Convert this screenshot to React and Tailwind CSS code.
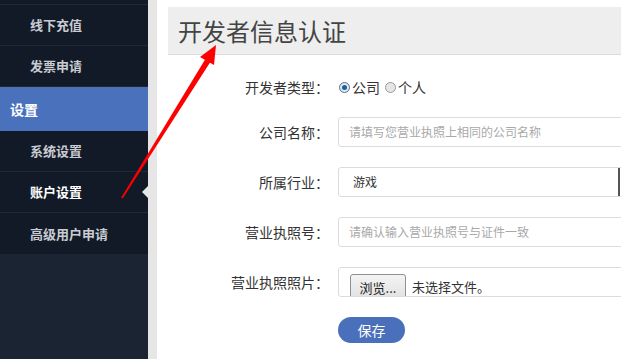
const font = { fontFamily: '"Microsoft YaHei", "Noto Sans CJK SC", sans-serif' };

const NavItem = ({ label, active, last }) => (
  <div
    className={`h-[41px] flex items-center pl-[30px] text-[13px] font-bold ${
      active ? 'text-white' : 'text-[#c9ccd2]'
    } ${last ? 'h-[40px]' : 'border-b border-[#1f2838]'}`}
  >
    {label}
  </div>
);

const Field = ({ label, children }) => (
  <div className="flex items-center">
    <div className="w-[172px] text-right text-[14px] text-[#333]">{label}</div>
    <div className="ml-[9px] -mr-[10px] flex-1">{children}</div>
  </div>
);

const TextBox = ({ placeholder, value, dark }) => (
  <div className="relative h-[30px] w-full border border-[#dcdcdc] rounded-[3px] flex items-center pl-[10px] text-[12px] bg-white">
    {value ? (
      <span className="text-[#333] pl-[4px]">{value}</span>
    ) : (
      <span className="text-[#a9a9a9]">{placeholder}</span>
    )}
    {dark && <div className="absolute right-[10px] top-0 h-full w-[2px] bg-[#555]" />}
  </div>
);

export default function App() {
  return (
    <div className="relative w-[621px] h-[359px] overflow-hidden flex bg-white" style={font}>
      <aside className="w-[148px] shrink-0 flex flex-col bg-[#1b2433]">
        <div className="bg-[#121a28]">
          <div className="h-[5px] border-b border-[#1f2838]" />
          <NavItem label="线下充值" />
          <NavItem label="发票申请" />
          <div className="h-[44px] bg-[#4a72bc] flex items-center pl-[10px] text-white font-bold text-[14px]">
            设置
          </div>
          <NavItem label="系统设置" />
          <div className="relative">
            <NavItem label="账户设置" active />
            <div className="absolute right-0 top-[14px] w-0 h-0 border-y-[6px] border-y-transparent border-r-[6px] border-r-[#e6e6e6]" />
          </div>
          <NavItem label="高级用户申请" last />
        </div>
      </aside>
      <div className="w-[9px] shrink-0 bg-[#e6e6e6]" />
      <main className="flex-1 pt-[7px] pl-[11px]">
        <div className="h-[48px] -mr-[10px] bg-[#eeeeee] border-b border-[#dddddd] flex items-center pl-[10px] text-[24px] text-[#444]">
          开发者信息认证
        </div>
        <div className="-ml-[11px] mt-[23px] flex flex-col">
          <div className="flex items-center h-[18px]">
            <div className="w-[172px] text-right text-[14px] text-[#333]">开发者类型：</div>
            <div className="ml-[10px] flex items-center text-[14px] text-[#333]">
              <span className="w-[11px] h-[11px] rounded-full border border-[#5a6e82] bg-[#dfe9f3] flex items-center justify-center mr-[2px]">
                <span className="w-[5px] h-[5px] rounded-full bg-[#1f5f9e]" />
              </span>
              公司
              <span className="ml-[5px] w-[11px] h-[11px] rounded-full border border-[#9a9a9a] bg-[#e6e6e6] mr-[2px]" />
              个人
            </div>
          </div>
          <div className="mt-[21px] flex flex-col gap-[20px]">
            <Field label="公司名称：">
              <TextBox placeholder="请填写您营业执照上相同的公司名称" />
            </Field>
            <Field label="所属行业：">
              <TextBox value="游戏" dark />
            </Field>
            <Field label="营业执照号：">
              <TextBox placeholder="请确认输入营业执照号与证件一致" />
            </Field>
            <Field label="营业执照照片：">
              <div className="h-[30px] w-full border border-[#dcdcdc] rounded-[3px] overflow-hidden flex items-start pl-[11px] pt-[6px]">
                <div className="h-[30px] w-[56px] border border-[#8f8f8f] rounded-[3px] bg-gradient-to-b from-[#f4f4f4] to-[#dedede] text-[13px] text-[#222] pt-[3px] text-center">
                  浏览...
                </div>
                <span className="ml-[6px] text-[13px] text-[#333] pt-[3px]">未选择文件。</span>
              </div>
            </Field>
          </div>
          <div className="ml-[181px] mt-[20px] w-[67px] h-[26px] rounded-full bg-[#4a70bb] text-white text-[14px] flex items-center justify-center">
            保存
          </div>
        </div>
      </main>
      <svg className="absolute left-0 top-0 pointer-events-none" width="621" height="359">
        <polygon points="121,198 123,198 211,61 206,58" fill="#ff0000" />
        <polygon points="216,45 200,57 214,65" fill="#ff0000" />
      </svg>
    </div>
  );
}
